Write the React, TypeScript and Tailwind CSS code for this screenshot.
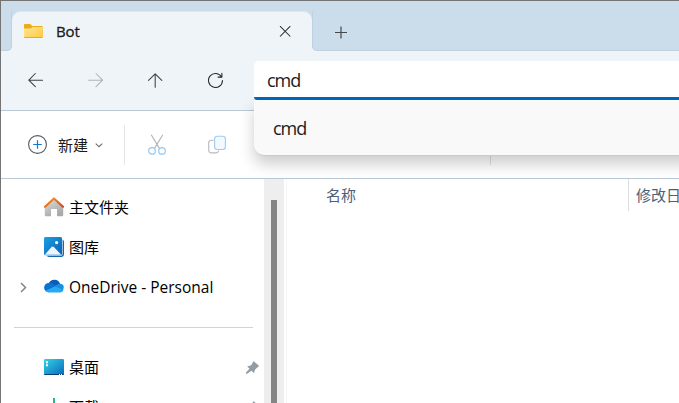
import type { ReactNode } from 'react'

const Back = () => (
  <svg width="16" height="16" viewBox="0 0 16 16" fill="none" stroke="#3f4245" strokeWidth="1.05" strokeLinecap="round" strokeLinejoin="round">
    <path d="M14.6 8.2H.8M7.3 1.5.8 8.2l6.5 6.5" />
  </svg>
)
const Forward = () => (
  <svg width="16" height="16" viewBox="0 0 16 16" fill="none" stroke="#aeb3b7" strokeWidth="1.05" strokeLinecap="round" strokeLinejoin="round">
    <path d="M.6 8.2h14M8 1.5 14.6 8.2 8 14.7" />
  </svg>
)
const Up = () => (
  <svg width="16" height="16" viewBox="0 0 16 16" fill="none" stroke="#3f4245" strokeWidth="1.05" strokeLinecap="round" strokeLinejoin="round">
    <path d="M7.2 15.3V1.8M.5 8.4l6.7-6.6 6.6 6.6" />
  </svg>
)
const Refresh = () => (
  <svg width="16" height="16" viewBox="0 0 16 16" fill="none" stroke="#26292b" strokeWidth="1.05" strokeLinecap="round" strokeLinejoin="round">
    <path d="M13.6 5A7 7 0 1 0 14.5 8.5M13.9 1.2V5.1H10" />
  </svg>
)
const Folder = () => (
  <svg width="19" height="15" viewBox="0 0 19 15">
    <defs>
      <linearGradient id="folder" x1="0" y1="0" x2="1" y2="1">
        <stop offset="0" stopColor="#ffe7a0" />
        <stop offset="1" stopColor="#ffc937" />
      </linearGradient>
    </defs>
    <path d="M0 .8Q0 0 .8 0H6.2L8.3 1.9H17.6Q18.7 1.9 18.7 3V13H0Z" fill="#f0aa18" />
    <path d="M0 4.4H6.7L8.7 2.9H18.7V12.8Q18.7 14 17.6 14H1.1Q0 14 0 12.8Z" fill="url(#folder)" />
    <path d="M0 13.1Q.2 14 1.1 14H17.6Q18.5 14 18.7 13.1Z" fill="#f0aa18" />
  </svg>
)
const NewItem = () => (
  <svg width="20" height="20" viewBox="0 0 20 20" fill="none">
    <circle cx="9.5" cy="9.5" r="8.9" stroke="#55585a" strokeWidth="1.1" />
    <path d="M9.5 5.2v8.6M5.2 9.5h8.6" stroke="#0f78cf" strokeWidth="1.2" />
  </svg>
)
const Scissors = () => (
  <svg width="18" height="21" viewBox="0 0 18 21" fill="none" strokeWidth="1.1">
    <path d="M3.2.8 11.6 14.6M14.8.8 6.4 14.6" stroke="#b3b3b3" />
    <circle cx="4" cy="16.9" r="3.3" stroke="#92c8f2" strokeWidth="1.2" />
    <circle cx="14" cy="16.9" r="3.3" stroke="#92c8f2" strokeWidth="1.2" />
  </svg>
)
const Copy = () => (
  <svg width="18" height="19" viewBox="0 0 18 19" fill="none" strokeWidth="1.1">
    <path d="M5.6 5.2H3.6Q.7 5.2.7 8.1v6.6q0 3.2 3.2 3.2h4q2.3 0 3-2.2" stroke="#b9b9b9" />
    <rect x="6.6" y="1.3" width="10.8" height="13.2" rx="2.7" stroke="#9bcdf4" fill="#f3f9fe" />
  </svg>
)
const Home = () => (
  <svg width="20" height="20" viewBox="0 0 20 20">
    <defs>
      <linearGradient id="wall" x1="0" y1="0" x2=".5" y2="1">
        <stop stopColor="#dedede" />
        <stop offset="1" stopColor="#aaa" />
      </linearGradient>
      <linearGradient id="roof" x1="0" y1="0" x2="1" y2="1">
        <stop stopColor="#f99b23" />
        <stop offset="1" stopColor="#cf461b" />
      </linearGradient>
    </defs>
    <path d="M.8 9 10 1.1 19.2 9v9.2q0 1-1 1H13V12H7v7.2H1.8q-1 0-1-1Z" fill="url(#wall)" />
    <path d="M1 9.7 10 1.5 19 9.7" fill="none" stroke="url(#roof)" strokeWidth="2.2" strokeLinecap="round" strokeLinejoin="round" />
  </svg>
)
const Gallery = () => (
  <svg width="20" height="20" viewBox="0 0 20 20">
    <defs>
      <linearGradient id="sky" x1="0" y1="0" x2="1" y2="1">
        <stop stopColor="#1ba0e5" />
        <stop offset="1" stopColor="#0861b4" />
      </linearGradient>
    </defs>
    <path d="M18.6 2.5Q20 3.2 20 4.7V17q0 3-3 3H5.3q-1.9 0-2.4-1.3H17q1.6 0 1.6-1.6Z" fill="#1467ad" />
    <rect width="18" height="18.2" rx="1.4" fill="url(#sky)" />
    <path d="M.8 17.8 7.3 10.2Q8.7 8.6 10.1 10.2L17.3 17.8Z" fill="#ecf6ff" />
    <circle cx="12.6" cy="5.6" r="1.6" fill="#fff" />
  </svg>
)
const OneDrive = () => (
  <svg className="-mt-0.5" width="20" height="14" viewBox="0 0 20 14">
    <path d="M4.8 4.3A6 6 0 0 1 16 4.7L12 9.5Z" fill="#0a5cb8" />
    <path d="M4.6 13.2A4.5 4.5 0 0 1 4.8 4q2.4-.5 4.3.9L15 9Z" fill="#0873d2" />
    <path d="M10.5 7 14.3 5Q18.8 3.8 19.8 7.8L19 12Z" fill="#1691e2" />
    <path d="M1.3 11.8 11.1 7.3 19.4 11.6Q18.3 13.5 16.2 13.5H4.7Q2.5 13.4 1.3 11.8Z" fill="#28a8ef" />
  </svg>
)
const Desktop = () => (
  <svg width="20" height="16" viewBox="0 0 20 16">
    <defs>
      <linearGradient id="desk" x1="0" y1="0" x2="1" y2="1">
        <stop stopColor="#35d3e5" />
        <stop offset="1" stopColor="#0869bd" />
      </linearGradient>
    </defs>
    <rect width="20" height="16" rx="1.2" fill="url(#desk)" />
    <path d="M0 15h20q-.2 1-1.2 1H1.2Q.2 16 0 15Z" fill="#073f70" />
    <path d="M2 2.2h2v2H2zM2 5.2h2v2H2zM15 15h1v1h-1zM17 15h1v1h-1z" fill="#fff" />
  </svg>
)
const Download = () => (
  <svg width="20" height="18" viewBox="0 0 20 18" fill="none" stroke="#22b98a" strokeWidth="2">
    <path d="M10 0v12M4 7l6 6 6-6M1 17h18" />
  </svg>
)
const Pin = () => (
  <svg width="13" height="13" viewBox="0 0 13 13" fill="#919ca5">
    <path d="M7.7.2 12.7 4.6Q13 6 11.2 6.4L9 8.7 8 11.9 5.2 9.7 1.2 12.8H0v-1.2L3.5 7.8 1.2 5.3 4.9 4.4 6.7 1.7Q6.7.5 7.7.2Z" />
  </svg>
)

function NavItem({ icon, label, expandable, pinned }: { icon: ReactNode; label: string; expandable?: boolean; pinned?: boolean }) {
  return (
    <div className="flex h-10 w-[263px] shrink-0 items-center pr-[5px] pl-[19px] text-[15px] text-black">
      <span className="w-6 shrink-0">
        {expandable && (
          <svg width="7" height="11" viewBox="0 0 7 11" fill="none" stroke="#858585" strokeWidth="1.5">
            <path d="m1 1 4.5 4.5L1 10" />
          </svg>
        )}
      </span>
      <span className="flex w-[25px] shrink-0">{icon}</span>
      <span className={expandable ? 'flex-1 pt-0.5 text-[15.5px] whitespace-nowrap' : 'flex-1 whitespace-nowrap'}>{label}</span>
      {pinned && <Pin />}
    </div>
  )
}

export default function App() {
  return (
    <div className="relative flex h-[403px] w-[679px] flex-col overflow-hidden border-t border-l border-[#747474] bg-white font-['Open_Sans','Noto_Sans_CJK_SC',sans-serif] text-[#1b1b1b]">
      <div className="h-2.5 shrink-0 bg-[#cbddeb]" />
      <div className="flex h-10 shrink-0 bg-[#eff4f9]">
        <div className="w-[11px] rounded-br-[5px] border-r border-b border-[#bfd0df] bg-[#cbddeb]" />
        <div className="w-[300px] bg-[linear-gradient(#cbddeb_12px,#eff4f9_12px)]">
          <div className="flex h-10 items-center rounded-t-[9px] border-t border-[#dce7f0] bg-[#eff4f9] pr-[21px] pl-3">
            <Folder />
            <span className="ml-[13px] flex-1 text-[15px] font-medium tracking-[-0.1px] [-webkit-text-stroke:0.3px_#1b1b1b]">Bot</span>
            <svg width="12" height="12" viewBox="0 0 12 12" stroke="#26292b" strokeWidth="1.05">
              <path d="m1 .2 10.3 10.3M11.3.2 1 10.5" />
            </svg>
          </div>
        </div>
        <div className="flex flex-1 items-center rounded-bl-[5px] border-b border-l border-[#bfd0df] bg-[#cbddeb] pt-[3px] pl-[21px]">
          <svg width="13" height="13" viewBox="0 0 13 13" stroke="#45494c" strokeWidth="1.2">
            <path d="M7 .5v12M1 6.5h12" />
          </svg>
        </div>
      </div>

      <div className="flex h-[60px] shrink-0 items-start border-b border-[#b8c8d6] bg-[#eff4f9] pt-[10px] pl-[27px]">
        <div className="mt-[11px] flex w-[226px] shrink-0 gap-11">
          <Back />
          <Forward />
          <Up />
          <Refresh />
        </div>
        <div className="flex h-[39px] flex-1 items-center rounded-tl-[5px] rounded-bl-[3px] border-b-[3px] border-[#0067c0] bg-white pt-0.5 pl-[13px] text-[18px] tracking-[-1px]">cmd</div>
      </div>

      <div className="flex h-[68px] shrink-0 items-center border-b border-[#b8c8d6] pl-[27px]">
        <NewItem />
        <span className="ml-[10px] pt-0.5 text-[15px]">新建</span>
        <svg className="mt-px ml-[7px]" width="8" height="5" viewBox="0 0 8 5" fill="none" stroke="#707070" strokeWidth="1.1">
          <path d="m.7.7 3.3 3 3.3-3" />
        </svg>
        <div className="mr-[23px] ml-[21px] h-10 w-px bg-[#e5e5e5]" />
        <Scissors />
        <div className="w-[42px]" />
        <Copy />
        <div className="ml-[264px] h-10 w-px bg-[#e0e0e0]" />
      </div>

      <div className="flex min-h-0 flex-1">
        <div className="flex w-[263px] shrink-0 flex-col overflow-hidden pt-2">
          <NavItem icon={<Home />} label="主文件夹" />
          <NavItem icon={<Gallery />} label="图库" />
          <NavItem icon={<OneDrive />} label="OneDrive - Personal" expandable />
          <div className="mt-5 mb-[19px] ml-[13px] h-px w-[239px] shrink-0 bg-[#d3d3d3]" />
          <NavItem icon={<Desktop />} label="桌面" pinned />
          <NavItem icon={<Download />} label="下载" pinned />
        </div>
        <div className="flex w-5 shrink-0 justify-center bg-[#eee] pt-[21px]">
          <div className="w-1.5 bg-[#858585]" />
        </div>
        <div className="ml-0.5 flex flex-1 border-l border-[#f7f7f7] text-[15px] text-[#4c607a]">
          <div className="h-8 w-[342px] border-r border-[#dfdfdf] pl-[39px] leading-8">名称</div>
          <div className="w-[51px] overflow-hidden pl-[7px] leading-8 whitespace-nowrap">修改日</div>
        </div>
      </div>

      <div className="absolute top-[99px] left-[253px] flex h-[56px] w-[450px] items-center rounded-bl-[10px] border-b border-[#cacaca] bg-[#f9f9f9] pt-0.5 pl-[19px] text-[18px] tracking-[-1px] shadow-[0_8px_15px_rgba(0,0,0,0.2)]">cmd</div>
    </div>
  )
}
